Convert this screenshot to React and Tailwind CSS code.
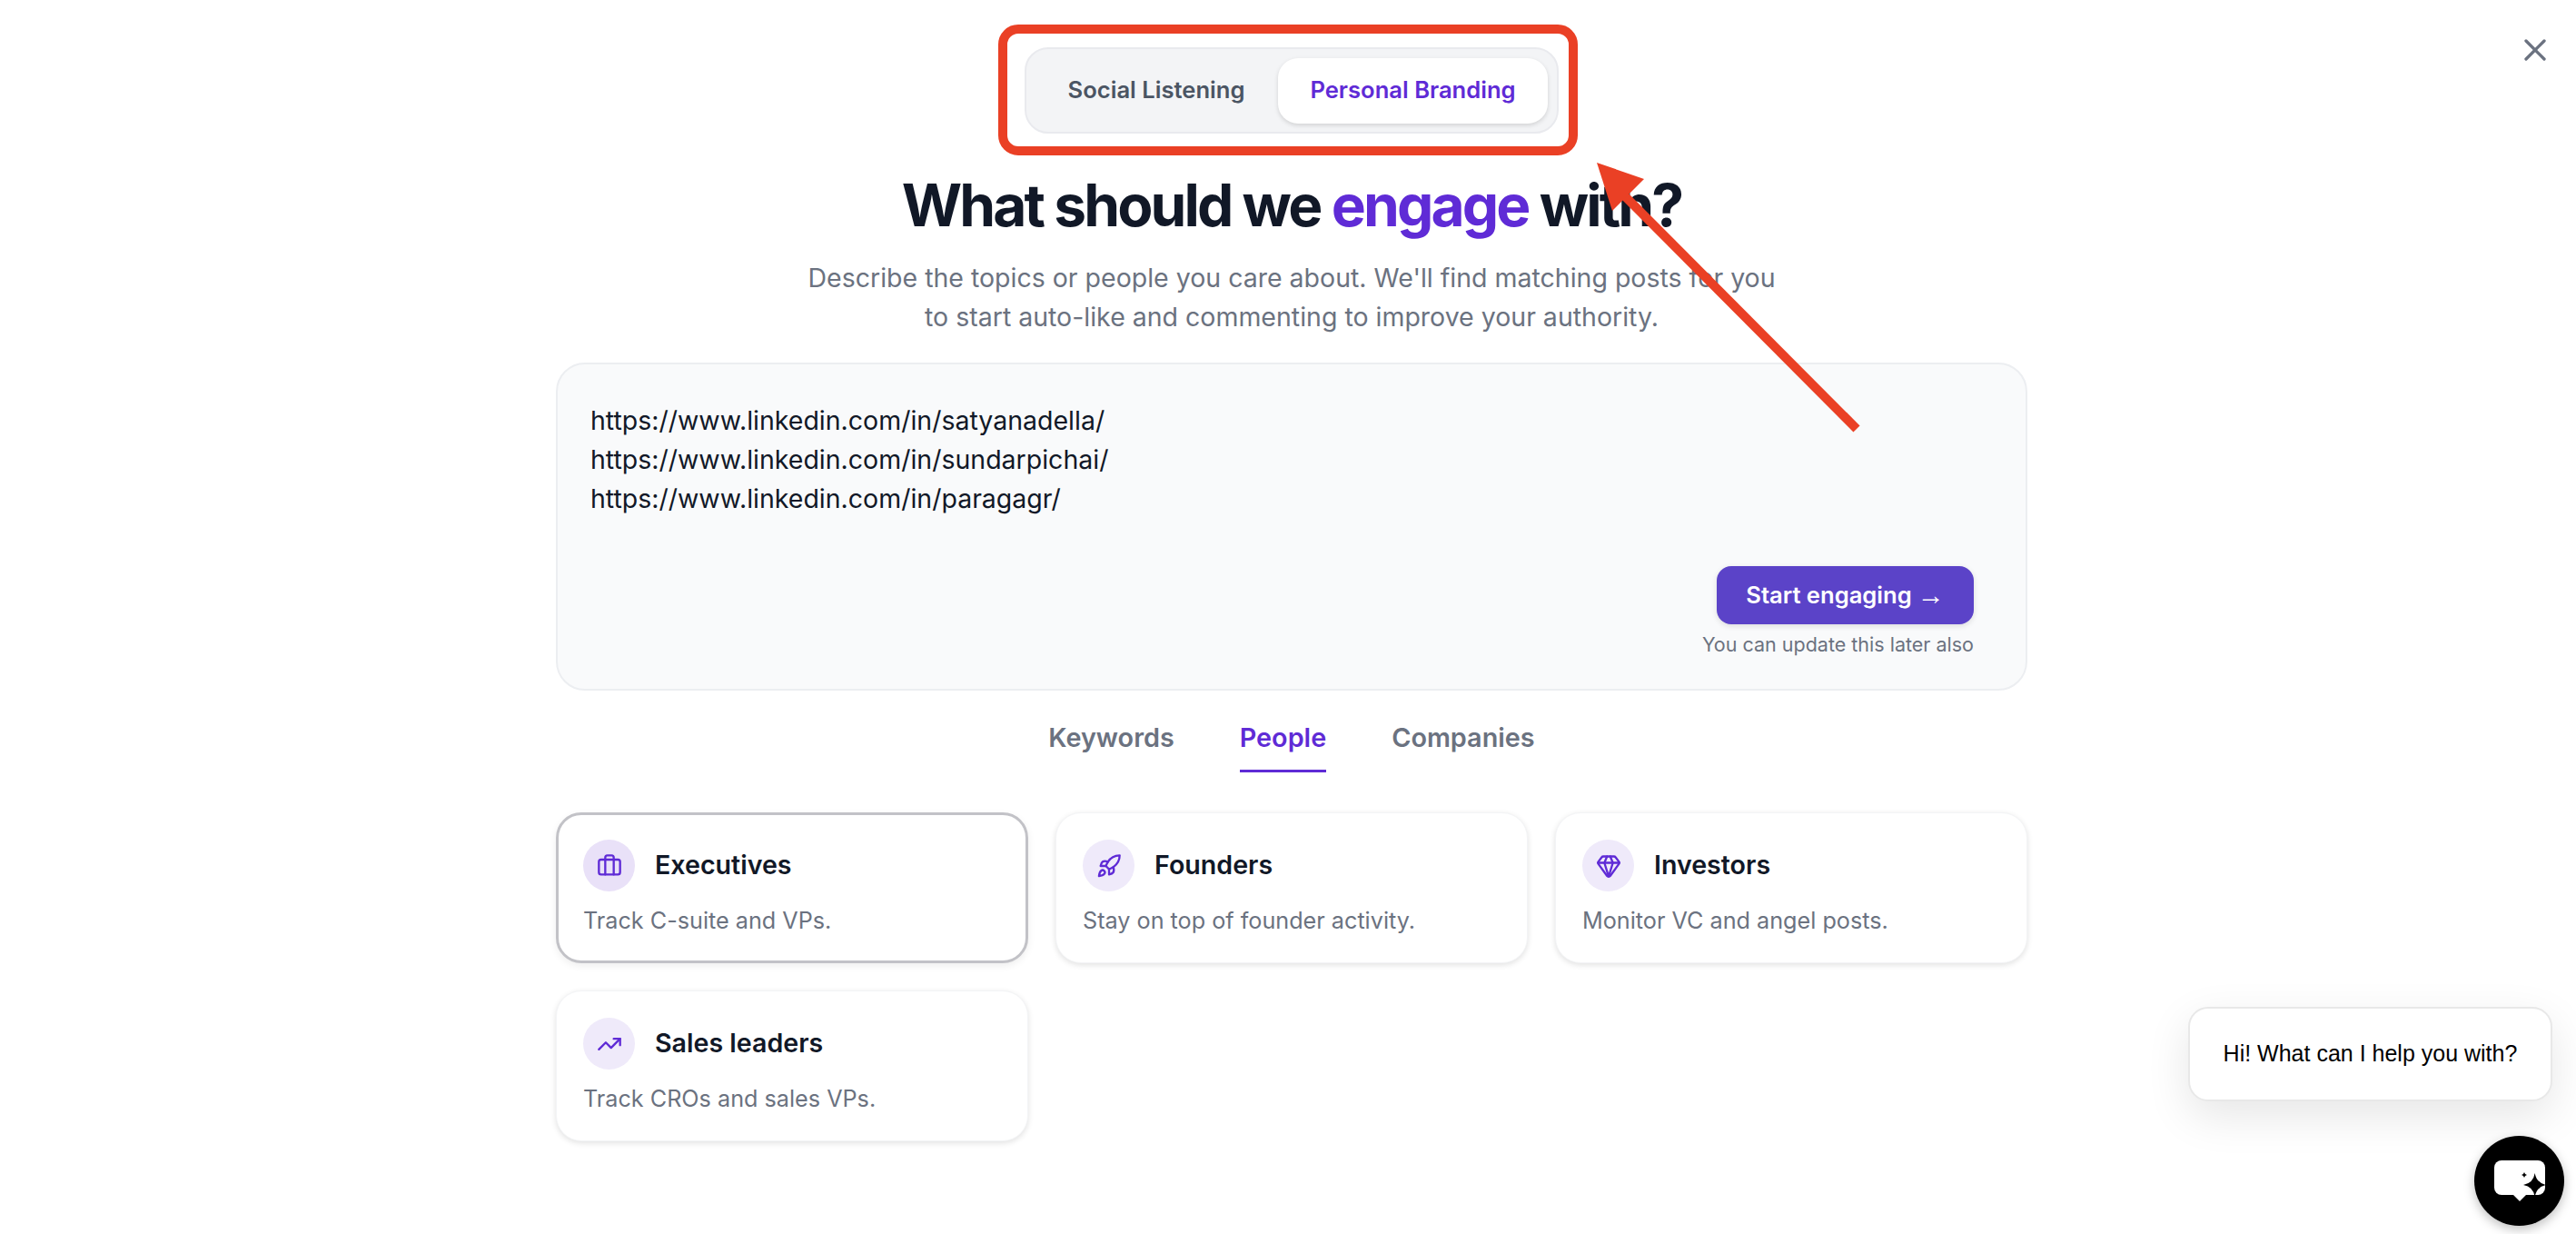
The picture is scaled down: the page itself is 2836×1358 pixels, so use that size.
import React from 'react'
import { X, Briefcase, Rocket, Gem, TrendingUp } from 'lucide-react'

const cards = [
  { title: 'Executives', desc: 'Track C-suite and VPs.', icon: Briefcase, selected: true },
  { title: 'Founders', desc: 'Stay on top of founder activity.', icon: Rocket },
  { title: 'Investors', desc: 'Monitor VC and angel posts.', icon: Gem },
  { title: 'Sales leaders', desc: 'Track CROs and sales VPs.', icon: TrendingUp },
]

function Card({ title, desc, icon: Icon, selected }) {
  return (
    <div
      className={`h-[166px] rounded-[28px] bg-white ${
        selected
          ? 'border-[3px] border-[#c2c2c7] px-[27px] pt-[27px] shadow-[0_3px_8px_rgba(0,0,0,0.07)]'
          : 'border border-[#f3f4f6] px-[29px] pt-[29px] shadow-[0_2px_6px_rgba(0,0,0,0.12)]'
      }`}
    >
      <div className="flex items-center gap-[22px]">
        <div className={`flex h-[57px] w-[57px] items-center justify-center rounded-full ${selected ? 'bg-[#e9e1f8]' : 'bg-[#efeafa]'}`}>
          <Icon className="h-[28px] w-[28px] text-[#5f2bd6]" strokeWidth={2} />
        </div>
        <span className="text-[28.6px] font-semibold text-[#111827]">{title}</span>
      </div>
      <p className="mt-[14px] text-[25.2px] leading-[36px] text-[#6b7280]">{desc}</p>
    </div>
  )
}

export default function App() {
  return (
    <div className="relative h-screen w-full overflow-hidden bg-white [font-family:Inter,sans-serif]">
      <main className="flex flex-col items-center pl-2 pt-[52px]">
        {/* Mode switch */}
        <div className="flex h-[95px] w-[588px] items-center gap-[8px] rounded-[26px] border-2 border-[#e9eaee] bg-[#f3f4f6] px-[10px]">
          <div className="flex h-[72px] flex-1 items-center justify-center pl-[7px] text-[25.6px] font-semibold text-[#4b5563]">
            Social Listening
          </div>
          <div className="flex h-[72px] w-[297px] items-center justify-center rounded-[22px] bg-white text-[25.6px] font-semibold text-[#5f2bd6] shadow-[0_2px_5px_rgba(0,0,0,0.14)]">
            Personal Branding
          </div>
        </div>

        <h1 className="mt-[34px] text-[64px] font-bold leading-[90px] tracking-[-2.9px] text-[#111827]">
          What should we <span className="text-[#5f2bd6]">engage</span> with?
        </h1>
        <p className="mt-[13px] text-center text-[28.5px] leading-[43px] text-[#6b7280]">
          Describe the topics or people you care about. We'll find matching posts for you
          <br />
          to start auto-like and commenting to improve your authority.
        </p>

        {/* Input box */}
        <div className="mt-[29px] flex h-[361px] w-[1620px] flex-col rounded-[32px] border-2 border-[#eceef1] bg-[#f9fafb] px-[36px] pt-[40px]">
          <div className="text-[28.5px] leading-[43px] text-[#111827]">
            <div>https://www.linkedin.com/in/satyanadella/</div>
            <div>https://www.linkedin.com/in/sundarpichai/</div>
            <div>https://www.linkedin.com/in/paragagr/</div>
          </div>
          <div className="mr-[21px] mt-[53px] flex flex-col items-end">
            <button className="flex h-[64px] w-[283px] items-center justify-center gap-[6px] rounded-[16px] bg-[#5b43c8] text-[25.6px] font-semibold text-white shadow-[0_2px_6px_rgba(0,0,0,0.12)]">
              Start engaging
              <span className="text-[30px] font-normal leading-[30px] [font-family:'Liberation_Sans',sans-serif]">→</span>
            </button>
            <span className="mt-[6px] text-[21.5px] leading-[32px] text-[#6b7280]">You can update this later also</span>
          </div>
        </div>

        {/* Tabs */}
        <div className="mt-[30px] flex items-start gap-[72px] text-[28.8px] font-semibold text-[#6b7280]">
          <div className="h-[60px] leading-[44px]">Keywords</div>
          <div className="h-[60px] border-b-[3px] border-[#5f2bd6] leading-[44px] text-[#5f2bd6]">People</div>
          <div className="h-[60px] leading-[44px]">Companies</div>
        </div>

        <div className="mt-[44px] grid w-[1620px] grid-cols-3 gap-[30px]">
          {cards.map((card) => (
            <Card key={card.title} {...card} />
          ))}
        </div>
      </main>

      <X className="absolute left-[2771px] top-[35px] h-[40px] w-[40px] text-[#6b7280]" strokeWidth={2} />

      {/* Annotation over the switch */}
      <div className="pointer-events-none absolute left-[1099px] top-[27px] h-[144px] w-[638px] rounded-[22px] border-[10px] border-[#ea4025]" />
      <svg className="pointer-events-none absolute left-0 top-0" width="2836" height="1358" viewBox="0 0 2836 1358">
        <line x1="2044" y1="472" x2="1785" y2="212" stroke="#ea4025" strokeWidth="10" />
        <polygon points="1758,179 1810,197 1775,232" fill="#ea4025" />
      </svg>

      {/* Chat widget */}
      <div className="absolute left-[2409px] top-[1108px] flex h-[104px] w-[401px] items-center justify-center rounded-[22px] border-2 border-[#e8e8e8] bg-white text-[25px] text-black shadow-[0_16px_48px_rgba(0,0,0,0.1)] [font-family:'Liberation_Sans',sans-serif]">
        Hi! What can I help you with?
      </div>
      <div className="absolute left-[2724px] top-[1250px] flex h-[99px] w-[99px] items-center justify-center rounded-full bg-black shadow-[0_4px_12px_rgba(0,0,0,0.25)]">
        <svg width="56" height="45" viewBox="0 0 56 45">
          <rect x="0" y="0" width="56" height="38" rx="8" fill="#fff" />
          <path d="M20 37h16l-8 8z" fill="#fff" />
          <path d="M44.7 14 Q46.5 25 57.5 27 Q46.5 29 44.7 40 Q43 29 32 27 Q43 25 44.7 14z" fill="#000" />
          <path d="M33 13 Q33.6 15.5 36 16 Q33.6 16.6 33 19 Q32.4 16.6 30 16 Q32.4 15.5 33 13z" fill="#000" />
        </svg>
      </div>
    </div>
  )
}
